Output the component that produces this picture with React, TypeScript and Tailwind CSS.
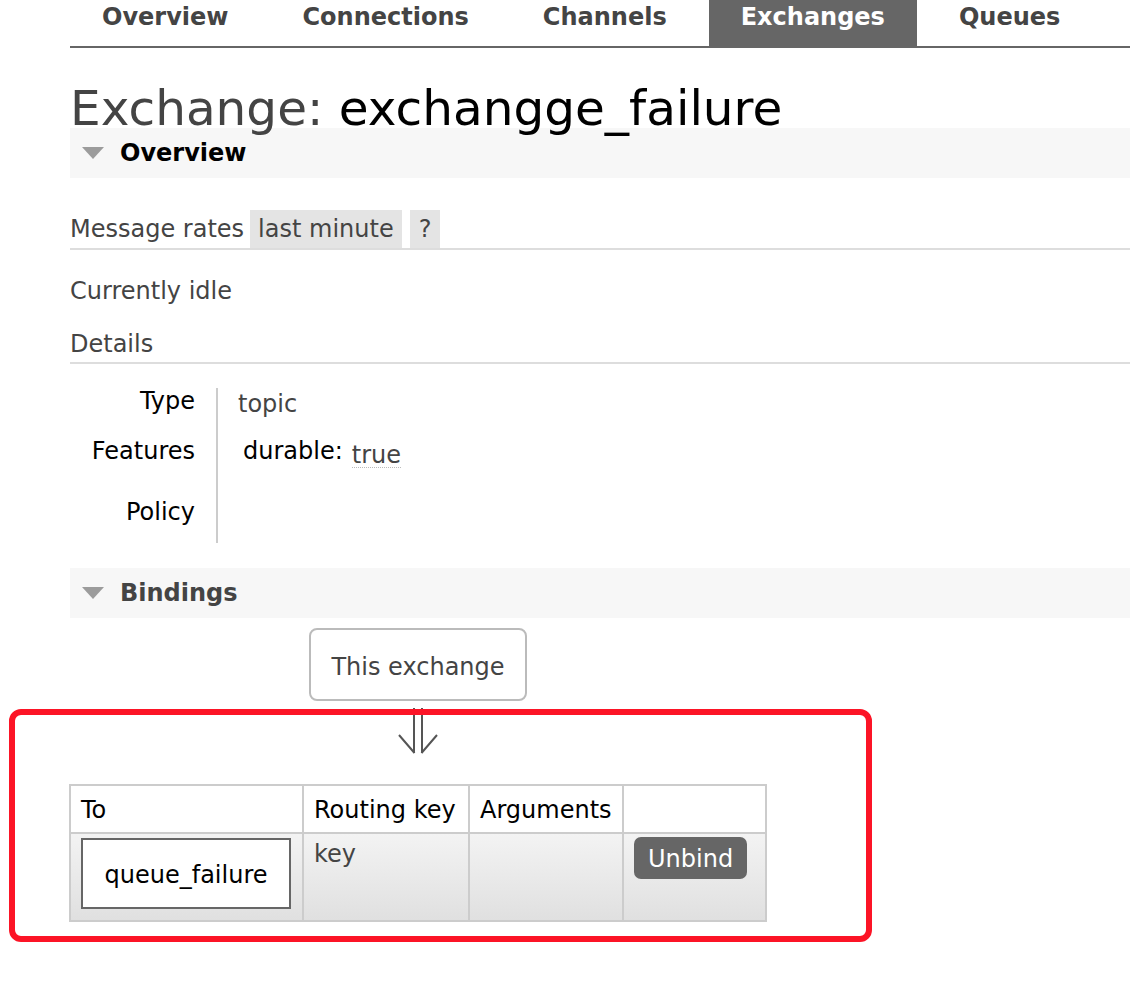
import React from 'react'

const tabs = ['Overview', 'Connections', 'Channels', 'Exchanges', 'Queues']

function Triangle() {
  return (
    <svg width="22" height="12" viewBox="0 0 22 12" className="ml-[12px] shrink-0">
      <path d="M0 0H22L11 12Z" fill="#9c9c9c" />
    </svg>
  )
}

function SectionHeader({ title, dark }: { title: string; dark?: boolean }) {
  return (
    <div className="flex h-[50px] items-center bg-[#f7f7f7]">
      <Triangle />
      <h2
        className={
          dark
            ? 'ml-[16px] text-[24px] font-bold leading-[28px] text-black'
            : 'ml-[16px] text-[24px] font-bold leading-[28px] text-[#444]'
        }
      >
        {title}
      </h2>
    </div>
  )
}

function DoubleArrow() {
  return (
    <svg width="40" height="46" viewBox="0 0 40 46" className="mt-[7px]">
      <path
        d="M16 0V45M24 0V45M1 27L16.5 45M39 27L23.5 45"
        fill="none"
        stroke="#555"
        strokeWidth="2"
      />
    </svg>
  )
}

export default function App() {
  return (
    <div className="relative min-h-[990px] w-[1130px] bg-white pl-[70px] font-['DejaVu_Sans',Verdana,sans-serif] text-[24px] text-[#444]">
      <nav className="flex gap-[10px] border-b-2 border-[#666]">
        {tabs.map((t) => (
          <a
            key={t}
            href="#"
            className={
              t === 'Exchanges'
                ? 'h-[46px] bg-[#666] px-[32px] pt-[3px] font-bold leading-[28px] text-white'
                : 'h-[46px] px-[32px] pt-[3px] font-bold leading-[28px] text-[#444]'
            }
          >
            {t}
          </a>
        ))}
      </nav>

      <h1 className="h-[80px] whitespace-nowrap pt-[36px] text-[48.5px] font-normal leading-[48px] text-[#444]">
        Exchange: <span className="text-black">exchangge_failure</span>
      </h1>

      <SectionHeader title="Overview" dark />

      <div className="mt-[32px] flex border-b-2 border-[#ddd] leading-[38px]">
        <span>Message rates</span>
        <span className="ml-[6px] bg-[#e4e4e4] px-[8px]">last minute</span>
        <span className="ml-[8px] bg-[#e4e4e4] px-[9px]">?</span>
      </div>

      <p className="mt-[27px] leading-[28px]">Currently idle</p>
      <p className="mt-[25px] border-b-2 border-[#ddd] pb-[4px] leading-[28px]">Details</p>

      <div className="mt-[24px] flex leading-[24px]">
        <div className="flex w-[125px] flex-col text-right text-black">
          <div className="h-[45px] pt-[1px]">Type</div>
          <div className="h-[57px] pt-[6px]">Features</div>
          <div className="h-[53px] pt-[10px]">Policy</div>
        </div>
        <div className="ml-[21px] flex flex-col border-l-2 border-[#ccc] pl-[20px]">
          <div className="h-[45px] pt-[4px]">topic</div>
          <div className="flex h-[57px] items-start pt-[6px]">
            <span className="ml-[5px] text-black">durable:</span>
            <span className="ml-[9px] mt-[4px] border-b border-dotted border-[#bbb]">true</span>
          </div>
          <div className="h-[53px]" />
        </div>
      </div>

      <div className="mt-[25px]">
        <SectionHeader title="Bindings" />
      </div>

      <div className="flex w-[696px] flex-col items-center">
        <div className="mt-[10px] rounded-[8px] border-2 border-[#bbb] px-[20px] pb-[18px] pt-[23px] leading-[28px]">
          This exchange
        </div>
        <DoubleArrow />
        <table className="mt-[30px] w-[696px] table-fixed border-collapse leading-[28px]">
          <colgroup>
            <col className="w-[233px]" />
            <col className="w-[166px]" />
            <col className="w-[154px]" />
            <col className="w-[143px]" />
          </colgroup>
          <thead>
            <tr>
              <th className="border-2 border-[#ccc] bg-white pb-[8px] pl-[10px] pt-[10px] text-left font-normal text-black">To</th>
              <th className="border-2 border-[#ccc] bg-white pb-[8px] pl-[10px] pt-[10px] text-left font-normal text-black">Routing key</th>
              <th className="border-2 border-[#ccc] bg-white pb-[8px] pl-[10px] pt-[10px] text-left font-normal text-black">Arguments</th>
              <th className="border-2 border-[#ccc] bg-white" />
            </tr>
          </thead>
          <tbody>
            <tr>
              <td className="border-2 border-[#ccc] bg-linear-to-b from-[#f3f3f3] to-[#e0e0e0] pb-[11px] pl-[10px] pt-[4px] align-top">
                <div className="w-[210px] border-2 border-[#666] bg-white px-[20px] pb-[18px] pt-[21px] text-center text-black">
                  queue_failure
                </div>
              </td>
              <td className="border-2 border-[#ccc] bg-linear-to-b from-[#f3f3f3] to-[#e0e0e0] pl-[10px] pt-[6px] align-top">key</td>
              <td className="border-2 border-[#ccc] bg-linear-to-b from-[#f3f3f3] to-[#e0e0e0]" />
              <td className="border-2 border-[#ccc] bg-linear-to-b from-[#f3f3f3] to-[#e0e0e0] pl-[10px] pt-[3px] align-top">
                <button type="button" className="rounded-[7px] bg-[#666] px-[14px] pb-[6px] pt-[8px] leading-[28px] text-white">
                  Unbind
                </button>
              </td>
            </tr>
          </tbody>
        </table>
      </div>

      <div className="pointer-events-none absolute left-[9px] top-[709px] h-[233px] w-[863px] rounded-[12px] border-[6px] border-[#fc1426]" />
    </div>
  )
}
